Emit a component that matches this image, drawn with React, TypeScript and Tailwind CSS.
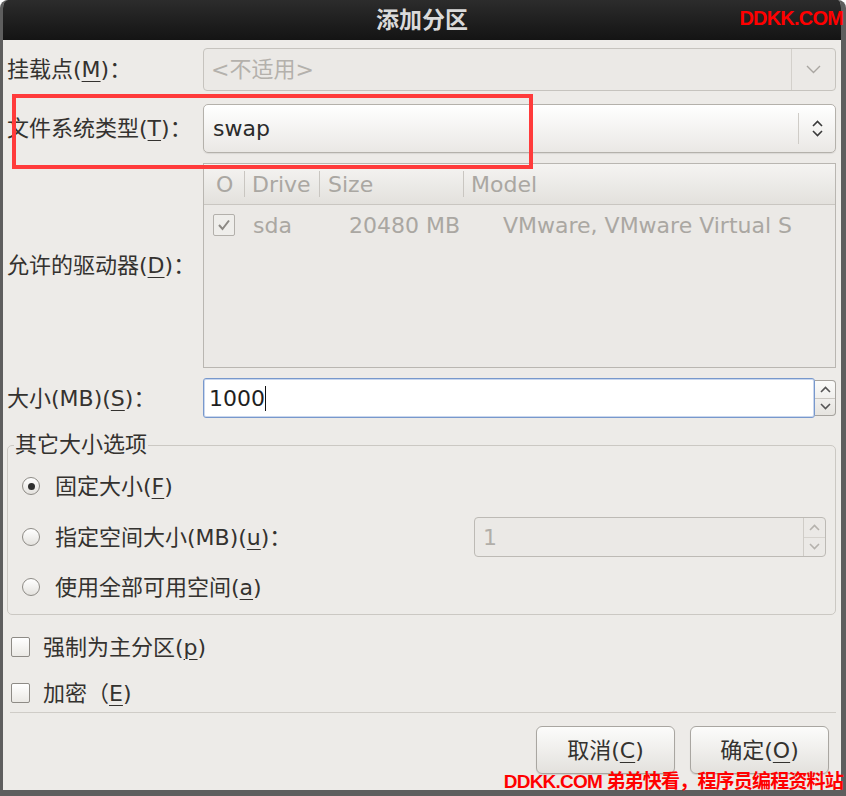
import type { ReactNode } from 'react'

// mnemonic letter, underlined like in GTK
function U({ children }: { children: ReactNode }) {
  return <span className="underline decoration-1 underline-offset-[4px]">{children}</span>
}

function ChevronUp({ color = '#3a3a3a' }: { color?: string }) {
  return (
    <svg width="11" height="7" viewBox="0 0 11 7" fill="none">
      <path d="M1 6 L5.5 1.5 L10 6" stroke={color} strokeWidth="1.6" />
    </svg>
  )
}

function ChevronDown({ color = '#3a3a3a' }: { color?: string }) {
  return (
    <svg width="11" height="7" viewBox="0 0 11 7" fill="none">
      <path d="M1 1 L5.5 5.5 L10 1" stroke={color} strokeWidth="1.6" />
    </svg>
  )
}

function Radio({ checked }: { checked?: boolean }) {
  return (
    <span className="w-[18px] h-[18px] rounded-full border border-[#8e8b86] bg-gradient-to-b from-white to-[#e4e2de] flex items-center justify-center shrink-0">
      {checked && <span className="w-[7px] h-[7px] rounded-full bg-[#2f2f2f]" />}
    </span>
  )
}

function CheckBox() {
  return <span className="w-[19px] h-[20px] rounded-[2px] border border-[#8e8b86] bg-gradient-to-b from-white to-[#ebe9e5] shrink-0" />
}

export default function App() {
  return (
    <div className="w-[846px] h-[796px] bg-white relative text-[22px] text-[#34322f] font-['DejaVu_Sans','Noto_Sans_CJK_SC',sans-serif]">
      <div className="h-full flex flex-col rounded-t-[8px] overflow-hidden bg-[#edebe8] border-l-[3px] border-r-[5px] border-b-[6px] border-[#5e5e5e]">
        {/* title bar */}
        <div className="h-[40px] shrink-0 flex items-center justify-center bg-gradient-to-b from-[#2c2c2c] to-[#141414] text-[#dadada] text-[23px] font-bold">
          添加分区
        </div>

        <div className="flex-1 flex flex-col pl-[4px] pr-[5px]">
          {/* mount point */}
          <div className="mt-[8px] h-[43px] flex items-center">
            <div className="w-[196px]">挂载点(<U>M</U>)：</div>
            <div className="flex-1 h-full flex rounded-[4px] border border-[#c6c3be] bg-[#ebe9e6]">
              <div className="flex-1 flex items-center pl-[7px] text-[#b4b1ac]">&lt;不适用&gt;</div>
              <div className="w-[44px] border-l border-[#d3d0cb] flex items-center justify-center">
                <svg width="15" height="9" viewBox="0 0 15 9" fill="none">
                  <path d="M1 1 L7.5 7.5 L14 1" stroke="#a9a6a1" strokeWidth="1.4" />
                </svg>
              </div>
            </div>
          </div>

          {/* file system type */}
          <div className="mt-[13px] h-[49px] flex items-center">
            <div className="w-[196px]">文件系统类型(<U>T</U>)：</div>
            <div className="flex-1 h-full flex rounded-[5px] border border-[#b4b1ab] bg-gradient-to-b from-white to-[#eae8e5] shadow-[0_1px_1px_rgba(0,0,0,0.08)]">
              <div className="flex-1 flex items-center pl-[9px] text-[#2b2b2b]">swap</div>
              <div className="w-[37px] py-[8px] flex">
                <div className="w-px bg-[#cfccc7]" />
                <div className="flex-1 flex flex-col items-center justify-center gap-[3px]">
                  <ChevronUp />
                  <ChevronDown />
                </div>
              </div>
            </div>
          </div>

          {/* drives */}
          <div className="mt-[10px] h-[205px] flex items-center">
            <div className="w-[196px]">允许的驱动器(<U>D</U>)：</div>
            <div className="flex-1 h-full flex flex-col border border-[#b9b6b1] bg-[#ebe9e6] text-[#aaa7a2]">
              <div className="h-[41px] flex items-center border-b border-[#c9c6c1] bg-gradient-to-b from-[#f5f4f2] to-[#e3e1dd]">
                <div className="w-[40px] pl-[12px]">O</div>
                <span className="w-px h-[26px] bg-[#c9c6c1]" />
                <div className="w-[74px] pl-[7px]">Drive</div>
                <span className="w-px h-[26px] bg-[#c9c6c1]" />
                <div className="w-[143px] pl-[8px]">Size</div>
                <span className="w-px h-[26px] bg-[#c9c6c1]" />
                <div className="flex-1 pl-[7px]">Model</div>
              </div>
              <div className="h-[40px] flex items-center">
                <div className="w-[41px] pl-[9px]">
                  <span className="w-[22px] h-[22px] rounded-[2px] border border-[#b3b0ab] bg-[#efeeeb] flex items-center justify-center">
                    <svg width="14" height="12" viewBox="0 0 14 12" fill="none">
                      <path d="M2 6 L5.5 10 L12 1.5" stroke="#8c8984" strokeWidth="2" />
                    </svg>
                  </span>
                </div>
                <div className="w-[75px] pl-[8px]">sda</div>
                <div className="w-[144px] text-right pr-[4px]">20480 MB</div>
                <div className="flex-1 pl-[39px] whitespace-nowrap overflow-hidden">VMware, VMware Virtual S</div>
              </div>
            </div>
          </div>

          {/* size */}
          <div className="mt-[10px] h-[40px] flex items-center">
            <div className="w-[196px]">大小(MB)(<U>S</U>)：</div>
            <div className="flex-1 h-full flex items-center">
              <div className="flex-1 h-full flex items-center rounded-[3px] border border-[#7898cc] bg-white pl-[5px] text-[#1f1f1f] shadow-[inset_0_0_0_1px_#c9d7ee]">
                1000
                <span className="w-px h-[25px] bg-[#111]" />
              </div>
              <div className="w-[21px] h-[36px] flex flex-col rounded-r-[4px] border border-l-0 border-[#a6a39e] bg-gradient-to-b from-[#fbfbfa] to-[#e6e4e0]">
                <div className="flex-1 flex items-center justify-center border-b border-[#cac7c2]">
                  <ChevronUp color="#555" />
                </div>
                <div className="flex-1 flex items-center justify-center">
                  <ChevronDown color="#555" />
                </div>
              </div>
            </div>
          </div>

          {/* other size options */}
          <fieldset className="mt-[15px] border border-[#cbc8c3] rounded-[5px] pl-[14px] pr-[9px] pt-[9px] pb-[7px]">
            <legend className="-ml-[8px] px-[1px] leading-[24px]">其它大小选项</legend>
            <div className="h-[40px] flex items-center gap-[15px]">
              <Radio checked />
              <span>固定大小(<U>F</U>)</span>
            </div>
            <div className="mt-[11px] h-[40px] flex items-center gap-[15px]">
              <Radio />
              <span>指定空间大小(MB)(<U>u</U>)：</span>
              <div className="ml-auto w-[352px] h-full flex rounded-[4px] border border-[#bdbab5] bg-[#ebe9e6]">
                <div className="flex-1 flex items-center pl-[8px] text-[#b1aea9]">1</div>
                <div className="w-[22px] flex flex-col border-l border-[#cfccc7]">
                  <div className="flex-1 flex items-center justify-center border-b border-[#d6d3ce]">
                    <ChevronUp color="#b5b2ad" />
                  </div>
                  <div className="flex-1 flex items-center justify-center">
                    <ChevronDown color="#b5b2ad" />
                  </div>
                </div>
              </div>
            </div>
            <div className="mt-[10px] h-[40px] flex items-center gap-[15px]">
              <Radio />
              <span>使用全部可用空间(<U>a</U>)</span>
            </div>
          </fieldset>

          {/* checkboxes */}
          <div className="mt-[17px] h-[30px] pl-[4px] flex items-center gap-[13px]">
            <CheckBox />
            <span>强制为主分区(<U>p</U>)</span>
          </div>
          <div className="mt-[16px] h-[30px] pl-[4px] flex items-center gap-[13px]">
            <CheckBox />
            <span>加密（<U>E</U>)</span>
          </div>

          <div className="mt-[4px] ml-[3px] h-px bg-[#cfccc7]" />

          {/* buttons */}
          <div className="mt-[13px] flex justify-end gap-[15px] pr-[7px]">
            <button className="w-[139px] h-[48px] rounded-[6px] border border-[#a9a6a1] bg-gradient-to-b from-[#fcfcfb] to-[#e3e1dd] shadow-[0_1px_1px_rgba(0,0,0,0.12)]">
              取消(<U>C</U>)
            </button>
            <button className="w-[139px] h-[48px] rounded-[6px] border border-[#a9a6a1] bg-gradient-to-b from-[#fcfcfb] to-[#e3e1dd] shadow-[0_1px_1px_rgba(0,0,0,0.12)]">
              确定(<U>O</U>)
            </button>
          </div>
        </div>
      </div>

      {/* tutorial annotation and watermarks */}
      <div className="absolute left-[12px] top-[94px] w-[521px] h-[75px] border-[4px] border-[#ff3b3b]" />
      <div className="absolute right-[3px] top-[3px] text-[#ff0000] text-[20px] font-bold tracking-[-0.8px] font-['Liberation_Sans',sans-serif]">
        DDKK.COM
      </div>
      <div className="absolute right-[3px] bottom-[0px] text-[#ff0000] text-[19px] font-bold tracking-[-0.8px] font-['Liberation_Sans','Noto_Sans_CJK_SC',sans-serif]">
        DDKK.COM 弟弟快看，程序员编程资料站
      </div>
    </div>
  )
}
